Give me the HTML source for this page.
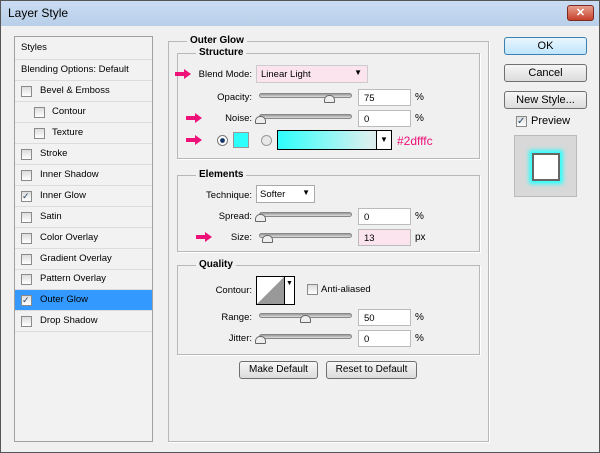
<!DOCTYPE html><html><head><style>
*{box-sizing:border-box;margin:0;padding:0}
body{width:600px;height:453px;overflow:hidden;font-family:"Liberation Sans",sans-serif;font-size:10px;color:#000;background:#fff}
.win{position:absolute;left:0;top:0;width:600px;height:453px;background:#f0f0f0;border:1px solid #555}
.title{position:absolute;left:0;top:0;width:598px;height:25px;background:linear-gradient(#c9dcf2,#b9cfe9);font-size:12px;padding:5px 7px;color:#000}
.close{position:absolute;left:566px;top:4px;width:27px;height:16px;background:linear-gradient(#e8a08e,#c6402b);border:1px solid #7a2a20;border-radius:3px;color:#fff;font-size:11px;font-weight:bold;text-align:center;line-height:14px}
.a{position:absolute;white-space:nowrap}
.left{position:absolute;left:13px;top:35px;width:139px;height:406px;border:1px solid #a0a0a0;background:#f2f2f2}
.li{position:absolute;left:0;width:137px;height:21px;border-bottom:1px solid #dcdcdc;font-size:9.5px;line-height:20px}
.cb{position:absolute;width:11px;height:11px;border:1px solid #8a8a8a;background:linear-gradient(#ddd,#fff)}
.box{position:absolute;border:1px solid #b8b8b8;box-shadow:1px 1px 0 #fff}
.lbl{position:absolute;background:#f0f0f0;font-weight:bold;font-size:10px;padding:0 3px}
.r{position:absolute;text-align:right;font-size:9.5px}
.sl{position:absolute;height:5px;background:linear-gradient(#999,#ddd);border:1px solid #888;border-radius:3px}
.th{position:absolute;width:11px;height:8px;background:#eee;border:1px solid #666;border-radius:5px 5px 1px 1px}
.in{position:absolute;height:17px;background:#fff;border:1px solid #bbb;font-size:9.5px;padding:3px 5px}
.btn{position:absolute;height:18px;border:1px solid #707070;border-radius:3px;background:linear-gradient(#f6f6f6,#dcdcdc);text-align:center;font-size:10px;line-height:16px}
.arr{position:absolute;width:16px;height:10px}
</style></head><body><div class="win">
<div class="title">Layer Style</div><div class="close">✕</div>
<div class="left">
<div class="li" style="top:0;height:23px;padding-left:6px;line-height:22px">Styles</div>
<div class="li" style="top:23px;padding-left:6px">Blending Options: Default</div>
<div class="li" style="top:44px;padding-left:25px">Bevel &amp; Emboss<div class="cb" style="left:6px;top:5px"></div></div>
<div class="li" style="top:65px;padding-left:37px">Contour<div class="cb" style="left:19px;top:5px"></div></div>
<div class="li" style="top:86px;padding-left:37px">Texture<div class="cb" style="left:19px;top:5px"></div></div>
<div class="li" style="top:107px;padding-left:25px">Stroke<div class="cb" style="left:6px;top:5px"></div></div>
<div class="li" style="top:128px;padding-left:25px">Inner Shadow<div class="cb" style="left:6px;top:5px"></div></div>
<div class="li" style="top:149px;padding-left:25px">Inner Glow<div class="cb" style="left:6px;top:5px;font-size:9px;line-height:9px;color:#246">✓</div></div>
<div class="li" style="top:170px;padding-left:25px">Satin<div class="cb" style="left:6px;top:5px"></div></div>
<div class="li" style="top:191px;padding-left:25px">Color Overlay<div class="cb" style="left:6px;top:5px"></div></div>
<div class="li" style="top:212px;padding-left:25px">Gradient Overlay<div class="cb" style="left:6px;top:5px"></div></div>
<div class="li" style="top:232px;padding-left:25px">Pattern Overlay<div class="cb" style="left:6px;top:5px"></div></div>
<div class="li" style="top:253px;padding-left:25px;background:#3399ff;color:#000">Outer Glow<div class="cb" style="left:6px;top:5px;font-size:9px;line-height:9px;color:#246">✓</div></div>
<div class="li" style="top:274px;padding-left:25px">Drop Shadow<div class="cb" style="left:6px;top:5px"></div></div>
</div>

<div class="box" style="left:167px;top:40px;width:321px;height:401px"></div>
<div class="lbl" style="left:186px;top:34px">Outer Glow</div>
<div class="box" style="left:176px;top:52px;width:303px;height:106px"></div>
<div class="lbl" style="left:195px;top:46px">Structure</div>
<div class="box" style="left:176px;top:174px;width:303px;height:77px"></div>
<div class="lbl" style="left:195px;top:168px">Elements</div>
<div class="box" style="left:176px;top:264px;width:303px;height:90px"></div>
<div class="lbl" style="left:195px;top:258px">Quality</div>

<svg class="arr" style="left:174px;top:68px" viewBox="0 0 16 10"><path d="M0 3h9V0l7 5-7 5V7H0z" fill="#ee1177"/></svg>
<svg class="arr" style="left:185px;top:112px" viewBox="0 0 16 10"><path d="M0 3h9V0l7 5-7 5V7H0z" fill="#ee1177"/></svg>
<svg class="arr" style="left:185px;top:134px" viewBox="0 0 16 10"><path d="M0 3h9V0l7 5-7 5V7H0z" fill="#ee1177"/></svg>
<svg class="arr" style="left:195px;top:231px" viewBox="0 0 16 10"><path d="M0 3h9V0l7 5-7 5V7H0z" fill="#ee1177"/></svg>

<div class="r" style="left:190px;width:61px;top:68px">Blend Mode:</div>
<div class="a" style="left:255px;top:64px;width:112px;height:18px;background:#fce4ef;border:1px solid #ccc;padding:3px 4px;font-size:9.5px">Linear Light<span style="position:absolute;right:5px;top:2px;font-size:8px">▼</span></div>
<div class="r" style="left:190px;width:61px;top:91px">Opacity:</div>
<div class="sl" style="left:258px;top:92px;width:93px"></div><div class="th" style="left:323px;top:94px"></div>
<div class="in" style="left:357px;top:88px;width:53px">75</div><div class="a" style="left:414px;top:91px">%</div>
<div class="r" style="left:190px;width:61px;top:112px">Noise:</div>
<div class="sl" style="left:258px;top:113px;width:93px"></div><div class="th" style="left:254px;top:115px"></div>
<div class="in" style="left:357px;top:109px;width:53px">0</div><div class="a" style="left:414px;top:112px">%</div>
<div class="a" style="left:216px;top:134px;width:11px;height:11px;border-radius:50%;border:1px solid #777;background:radial-gradient(#136 30%,#fff 45%)"></div>
<div class="a" style="left:232px;top:131px;width:16px;height:16px;background:#2dfffc;border:1px solid #999"></div>
<div class="a" style="left:260px;top:134px;width:11px;height:11px;border-radius:50%;border:1px solid #999;background:#e8e8e8"></div>
<div class="a" style="left:276px;top:129px;width:115px;height:20px;border:1px solid #000;background:linear-gradient(90deg,#2dfffc,#d8f0f0 80%,#e0e0e0)"><div style="position:absolute;right:0;top:0;width:15px;height:18px;background:#fff;border-left:1px solid #000;font-size:8px;text-align:center;line-height:18px">▼</div></div>
<div class="a" style="left:396px;top:133px;color:#ee1177;font-size:12px">#2dfffc</div>

<div class="r" style="left:190px;width:61px;top:189px">Technique:</div>
<div class="a" style="left:255px;top:184px;width:59px;height:18px;background:#fff;border:1px solid #aaa;padding:3px 3px;font-size:9.5px">Softer<span style="position:absolute;right:4px;top:2px;font-size:8px">▼</span></div>
<div class="r" style="left:190px;width:61px;top:210px">Spread:</div>
<div class="sl" style="left:258px;top:211px;width:93px"></div><div class="th" style="left:254px;top:213px"></div>
<div class="in" style="left:357px;top:207px;width:53px">0</div><div class="a" style="left:414px;top:210px">%</div>
<div class="r" style="left:190px;width:61px;top:231px">Size:</div>
<div class="sl" style="left:258px;top:232px;width:93px"></div><div class="th" style="left:261px;top:234px"></div>
<div class="in" style="left:357px;top:228px;width:53px;background:#fce4ef">13</div><div class="a" style="left:414px;top:231px">px</div>

<div class="r" style="left:190px;width:61px;top:284px">Contour:</div>
<div class="a" style="left:255px;top:275px;width:39px;height:29px;border:1px solid #000;background:#fff"><svg width="27" height="27" style="position:absolute;left:0;top:0"><path d="M0 27L27 0V27z" fill="#999"/></svg><div style="position:absolute;left:27px;top:0;width:10px;height:27px;border-left:1px solid #000;font-size:7px;text-align:center;line-height:14px">▼</div></div>
<div class="cb" style="left:306px;top:283px"></div><div class="a" style="left:320px;top:283px;font-size:9.5px">Anti-aliased</div>
<div class="r" style="left:190px;width:61px;top:311px">Range:</div>
<div class="sl" style="left:258px;top:312px;width:93px"></div><div class="th" style="left:299px;top:314px"></div>
<div class="in" style="left:357px;top:308px;width:53px">50</div><div class="a" style="left:414px;top:311px">%</div>
<div class="r" style="left:190px;width:61px;top:332px">Jitter:</div>
<div class="sl" style="left:258px;top:333px;width:93px"></div><div class="th" style="left:254px;top:335px"></div>
<div class="in" style="left:357px;top:329px;width:53px">0</div><div class="a" style="left:414px;top:332px">%</div>

<div class="btn" style="left:238px;top:360px;width:79px">Make Default</div>
<div class="btn" style="left:325px;top:360px;width:91px">Reset to Default</div>

<div class="btn" style="left:503px;top:36px;width:83px;border-color:#3c7fb1;background:linear-gradient(#eaf6fd,#bee6fd);font-size:11px">OK</div>
<div class="btn" style="left:503px;top:63px;width:83px;font-size:11px">Cancel</div>
<div class="btn" style="left:503px;top:90px;width:83px;font-size:11px">New Style...</div>
<div class="cb" style="left:515px;top:115px;font-size:10px;line-height:9px;color:#246">✓</div>
<div class="a" style="left:530px;top:114px;font-size:11px">Preview</div>
<div class="a" style="left:513px;top:134px;width:63px;height:62px;background:#d8d8d8;border:1px solid #bbb"><div style="position:absolute;left:17px;top:17px;width:28px;height:28px;background:#fff;border:2px solid #666;box-shadow:0 0 4px 3px #2dfffc"></div></div>
</div></body></html>
